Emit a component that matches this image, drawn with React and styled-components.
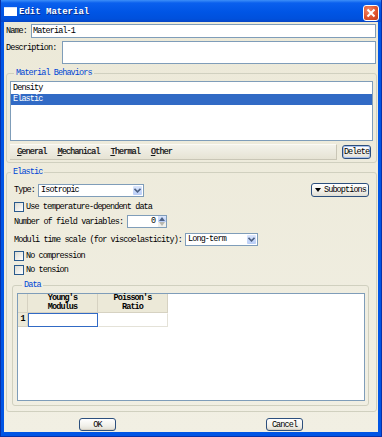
import React from "react";
import styled, { createGlobalStyle } from "styled-components";

const GlobalStyle = createGlobalStyle`
  body {
    margin: 0;
    background: #fff;
  }
  * {
    box-sizing: border-box;
  }
`;

const ChevronDown = () => (
  <svg width="7" height="5" viewBox="0 0 7 5">
    <path d="M0.5 0.8 L3.5 3.8 L6.5 0.8" fill="none" stroke="#4d6185" strokeWidth="1.6" />
  </svg>
);

const CloseX = () => (
  <svg width="10" height="10" viewBox="0 0 10 10">
    <path d="M1.5 1.5 L8.5 8.5 M8.5 1.5 L1.5 8.5" stroke="#fff" strokeWidth="2" />
  </svg>
);

const Triangle = ({ up, color = "#000" }) => (
  <svg width="6" height="4" viewBox="0 0 6 4">
    <path d={up ? "M0 4 L3 0 L6 4 Z" : "M0 0 L6 0 L3 4 Z"} fill={color} />
  </svg>
);

const App = () => {
  return (
    <>
      <GlobalStyle />
      <Window>
        <TitleBar>
          <TitleIcon />
          <TitleText>Edit Material</TitleText>
          <CloseButton>
            <CloseX />
          </CloseButton>
        </TitleBar>
        <Content>
          <FieldRow $h={14}>
            <FieldLabel $w={25}>Name:</FieldLabel>
            <TextBox>Material-1</TextBox>
          </FieldRow>
          <FieldRow $h={23} $mt={3}>
            <FieldLabel $w={56} $top>
              Description:
            </FieldLabel>
            <TextBox />
          </FieldRow>

          <Group $margin="4px 1px 0 2px" $padding="0 3px 2px">
            <Legend $indent={4}>Material Behaviors</Legend>
            <ListBox>
              <ListItem>Density</ListItem>
              <ListItem $selected>Elastic</ListItem>
            </ListBox>
            <TabRow>
              <TabStrip>
                <Tab>
                  <u>G</u>eneral
                </Tab>
                <Tab>
                  <u>M</u>echanical
                </Tab>
                <Tab>
                  <u>T</u>hermal
                </Tab>
                <Tab>
                  <u>O</u>ther
                </Tab>
              </TabStrip>
              <PushButton $w={29} $h={14} $focus>
                Delete
              </PushButton>
            </TabRow>
          </Group>

          <Group $margin="4px 1px 0 2px" $padding="0 0 5px">
            <Legend $indent={4}>Elastic</Legend>
            <Controls>
              <ControlRow $h={14} $mt={6}>
                <span>Type:</span>
                <Combo $w={106}>
                  <ComboText>Isotropic</ComboText>
                  <ComboArrow>
                    <ChevronDown />
                  </ComboArrow>
                </Combo>
                <SubButton>
                  <Triangle />
                  Suboptions
                </SubButton>
              </ControlRow>
              <ControlRow $h={11} $mt={4} $gap={2}>
                <CheckBox />
                <span>Use temperature-dependent data</span>
              </ControlRow>
              <ControlRow $h={13} $mt={3} $gap={4}>
                <span>Number of field variables:</span>
                <Spinner>
                  <SpinValue>0</SpinValue>
                  <SpinButtons>
                    <SpinButton $active>
                      <Triangle up color="#4d6185" />
                    </SpinButton>
                    <SpinButton>
                      <Triangle color="#b8b8b0" />
                    </SpinButton>
                  </SpinButtons>
                </Spinner>
              </ControlRow>
              <ControlRow $h={13} $mt={5}>
                <span>Moduli time scale (for viscoelasticity):</span>
                <Combo $w={73}>
                  <ComboText>Long-term</ComboText>
                  <ComboArrow>
                    <ChevronDown />
                  </ComboArrow>
                </Combo>
              </ControlRow>
              <ControlRow $h={11} $mt={4} $gap={2}>
                <CheckBox />
                <span>No compression</span>
              </ControlRow>
              <ControlRow $h={11} $mt={3} $gap={2}>
                <CheckBox />
                <span>No tension</span>
              </ControlRow>
            </Controls>

            <Group $margin="5px 7px 0 5px" $padding="0 3px 4px 4px">
              <Legend $indent={5}>Data</Legend>
              <Table>
                <Grid>
                  <HeadCell />
                  <HeadCell>
                    Young's
                    <br />
                    Modulus
                  </HeadCell>
                  <HeadCell>
                    Poisson's
                    <br />
                    Ratio
                  </HeadCell>
                  <RowHead>1</RowHead>
                  <Cell $active />
                  <Cell />
                </Grid>
              </Table>
            </Group>
          </Group>

          <ButtonBar>
            <PushButton $w={37} $h={13}>
              OK
            </PushButton>
            <PushButton $w={37} $h={13}>
              Cancel
            </PushButton>
          </ButtonBar>
        </Content>
      </Window>
    </>
  );
};

export default App;

const Window = styled.div`
  width: 382px;
  height: 437px;
  display: flex;
  flex-direction: column;
  background: #0055e5;
  border: 1px solid #0831a8;
  border-top: none;
  font-family: "Liberation Mono", monospace;
  font-size: 8.5px;
  letter-spacing: -0.9px;
  color: #000;
`;

const TitleBar = styled.div`
  height: 22px;
  flex: none;
  display: flex;
  align-items: center;
  padding: 1px 2px 0 3px;
  background: linear-gradient(#3d8ff8 0, #0a60ee 3px, #0055e5 12px, #0050dc 19px, #0744c4 22px);
`;

const TitleIcon = styled.div`
  width: 13px;
  height: 9px;
  margin-right: 2px;
  background: #fff;
  border-top: 1px solid #d7e4fb;
`;

const TitleText = styled.div`
  flex: 1;
  color: #fff;
  font-weight: bold;
  font-size: 9px;
  letter-spacing: 0;
  text-shadow: 1px 1px 0 #0b2e8a;
`;

const CloseButton = styled.div`
  width: 16px;
  height: 16px;
  margin-top: 2px;
  display: flex;
  align-items: center;
  justify-content: center;
  border: 1px solid #fff;
  border-radius: 3px;
  background: radial-gradient(circle at 35% 30%, #f28b6a, #e0542e 55%, #c23c1b);
`;

const Content = styled.div`
  flex: 1;
  margin: 0 3px 4px;
  padding-top: 2px;
  display: flex;
  flex-direction: column;
  background: linear-gradient(#ece9d8, #f1efe3);
`;

const FieldRow = styled.div`
  display: flex;
  height: ${(p) => p.$h}px;
  margin-top: ${(p) => p.$mt || 0}px;
  padding: 0 2px;
`;

const FieldLabel = styled.div`
  width: ${(p) => p.$w}px;
  flex: none;
  line-height: ${(p) => (p.$top ? "10px" : "14px")};
  padding-top: ${(p) => (p.$top ? "2px" : "0")};
`;

const TextBox = styled.div`
  flex: 1;
  border: 1px solid #7f9db9;
  background: #fff;
  padding-left: 1px;
  line-height: 12px;
`;

const Group = styled.fieldset`
  margin: ${(p) => p.$margin};
  padding: ${(p) => p.$padding};
  border: 1px solid #d0d0bf;
  border-radius: 3px;
  min-width: 0;
`;

const Legend = styled.legend`
  margin-left: ${(p) => p.$indent}px;
  padding: 0 2px;
  height: 10px;
  line-height: 10px;
  color: #0046d5;
`;

const ListBox = styled.div`
  margin-top: 3px;
  height: 60px;
  padding-top: 1px;
  border: 1px solid #7f9db9;
  background: #fff;
`;

const ListItem = styled.div`
  height: 11px;
  line-height: 11px;
  padding-left: 2px;
  background: ${(p) => (p.$selected ? "#316ac5" : "transparent")};
  color: ${(p) => (p.$selected ? "#fff" : "#000")};
`;

const TabRow = styled.div`
  display: flex;
  align-items: center;
  gap: 5px;
  height: 16px;
  margin-top: 3px;
  padding-right: 2px;
`;

const TabStrip = styled.div`
  flex: 1;
  height: 16px;
  display: flex;
  align-items: center;
  gap: 11px;
  padding-left: 7px;
  background: linear-gradient(#f3f2ea, #e6e3d4);
  border-top: 1px solid #fbfaf5;
  border-right: 1px solid #c9c6b6;
  border-bottom: 1px solid #c9c6b6;
`;

const Tab = styled.span`
  color: #1a1a1a;
  text-shadow: 0.4px 0 0 #555;
`;

const PushButton = styled.div`
  width: ${(p) => p.$w}px;
  height: ${(p) => p.$h}px;
  flex: none;
  display: flex;
  align-items: center;
  justify-content: center;
  border: 1px solid #2c4f7d;
  border-radius: 3px;
  background: linear-gradient(#ffffff, #f1f0ea 60%, #e0ded3);
  box-shadow: ${(p) => (p.$focus ? "inset 0 0 0 1px #a9c1ec" : "inset 0 -1px 0 #d6d0c5")};
`;

const Controls = styled.div`
  padding: 0 7px;
`;

const ControlRow = styled.div`
  display: flex;
  align-items: center;
  gap: ${(p) => (p.$gap !== undefined ? p.$gap : 3)}px;
  height: ${(p) => p.$h}px;
  margin-top: ${(p) => p.$mt}px;
  white-space: nowrap;
`;

const Combo = styled.div`
  width: ${(p) => p.$w}px;
  height: 13px;
  display: flex;
  align-items: stretch;
  border: 1px solid #7f9db9;
  background: #fff;
`;

const ComboText = styled.div`
  flex: 1;
  padding-left: 2px;
  line-height: 11px;
`;

const ComboArrow = styled.div`
  width: 9px;
  margin: 1px;
  display: flex;
  align-items: center;
  justify-content: center;
  border-radius: 1px;
  background: linear-gradient(#dbe6fc, #b9cdf7);
`;

const SubButton = styled.div`
  margin-left: auto;
  width: 58px;
  height: 14px;
  display: flex;
  align-items: center;
  gap: 3px;
  padding-left: 3px;
  border: 1px solid #2c4f7d;
  border-radius: 3px;
  background: linear-gradient(#ffffff, #f1f0ea 60%, #e0ded3);
`;

const CheckBox = styled.div`
  width: 10px;
  height: 10px;
  flex: none;
  border: 1px solid #2a5a8c;
  background: linear-gradient(135deg, #dcdbd2, #ffffff);
`;

const Spinner = styled.div`
  width: 40px;
  height: 13px;
  display: flex;
  border: 1px solid #7f9db9;
  background: #fff;
`;

const SpinValue = styled.div`
  flex: 1;
  text-align: right;
  padding-right: 3px;
  line-height: 11px;
`;

const SpinButtons = styled.div`
  width: 8px;
  display: flex;
  flex-direction: column;
`;

const SpinButton = styled.div`
  flex: 1;
  display: flex;
  align-items: center;
  justify-content: center;
  background: ${(p) => (p.$active ? "linear-gradient(#dbe6fc, #b9cdf7)" : "#f0f0ec")};
`;

const Table = styled.div`
  margin-top: 3px;
  height: 108px;
  border: 1px solid #7f9db9;
  background: #fff;
`;

const Grid = styled.div`
  display: grid;
  grid-template-columns: 10px 70px 70px;
  grid-template-rows: 19px 14px;
  width: fit-content;
`;

const HeadCell = styled.div`
  background: #ece9d8;
  border-right: 1px solid #d6d2c2;
  border-bottom: 1px solid #d6d2c2;
  font-weight: bold;
  text-align: center;
  line-height: 9px;
  padding-top: 0;
`;

const RowHead = styled(HeadCell)`
  line-height: 13px;
`;

const Cell = styled.div`
  border: 1px solid ${(p) => (p.$active ? "#316ac5" : "transparent")};
  border-right-color: ${(p) => (p.$active ? "#316ac5" : "#e4e2d8")};
  border-bottom-color: ${(p) => (p.$active ? "#316ac5" : "#e4e2d8")};
`;

const ButtonBar = styled.div`
  display: flex;
  justify-content: space-around;
  margin-top: 6px;
`;
